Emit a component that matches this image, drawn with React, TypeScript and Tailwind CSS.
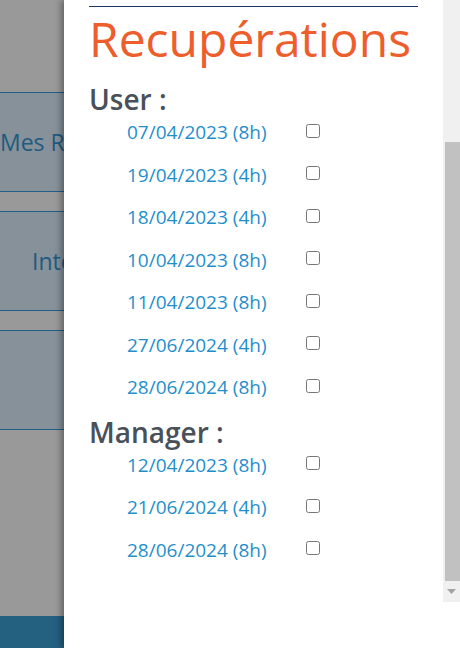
import React from 'react';

const userDates = [
  '07/04/2023 (8h)',
  '19/04/2023 (4h)',
  '18/04/2023 (4h)',
  '10/04/2023 (8h)',
  '11/04/2023 (8h)',
  '27/06/2024 (4h)',
  '28/06/2024 (8h)',
];

const managerDates = ['12/04/2023 (8h)', '21/06/2024 (4h)', '28/06/2024 (8h)'];

const font = { fontFamily: '"Open Sans", "Noto Sans", sans-serif' };

const DateRow = ({ label }: { label: string }) => (
  <div className="flex h-[42.5px] items-center">
    <span className="w-[217px] pl-[38px] text-[19px] text-[#1f8fcc]">{label}</span>
    <input type="checkbox" className="-mt-[3px] h-[14px] w-[14px] accent-[#666]" />
  </div>
);

const Backdrop = () => (
  <div className="flex w-[64px] shrink-0 flex-col overflow-hidden bg-[#999999]">
    <div className="h-[92px]" />
    <div className="flex h-[100px] w-[200px] items-center border-y border-[#1f5f8a] bg-[#86919a] text-[23px] text-[#1f5a80]">
      <span className="whitespace-nowrap">Mes Récupérations</span>
    </div>
    <div className="h-[19px]" />
    <div className="flex h-[100px] w-[200px] items-center border-y border-[#1f5f8a] bg-[#86919a] pl-[32px] text-[23px] text-[#1f5a80]">
      <span className="whitespace-nowrap">Interventions</span>
    </div>
    <div className="h-[19px]" />
    <div className="h-[100px] w-[200px] border-y border-[#1f5f8a] bg-[#86919a]" />
    <div className="flex-1" />
    <div className="h-[32px] bg-[#24607f]" />
  </div>
);

const Scrollbar = () => (
  <div className="flex h-[602px] w-[17px] shrink-0 flex-col bg-[#f0f0f0]">
    <div className="h-[142px]" />
    <div className="ml-[2px] h-[439px] bg-[#c1c1c1]" />
    <div className="flex flex-1 items-center justify-center">
      <svg width="9" height="5" viewBox="0 0 9 5">
        <path d="M0 0h9L4.5 5z" fill="#a3a3a3" />
      </svg>
    </div>
  </div>
);

export default function App() {
  return (
    <div className="flex h-[648px] w-[460px] overflow-hidden bg-white" style={font}>
      <Backdrop />
      <div className="flex flex-1 bg-white shadow-[-3px_0_6px_rgba(0,0,0,0.35)]">
        <div className="flex-1 pl-[25px] pt-[6px]">
          <div className="w-[329px] border-t border-[#1c3668]" />
          <h1 className="text-[48px] leading-[64px] font-normal text-[#ee5d2c]">Recupérations</h1>
          <h2 className="mt-[16px] text-[28px] leading-[24px] font-semibold text-[#4a5059]">User :</h2>
          {userDates.map((d, i) => (
            <DateRow key={i} label={d} />
          ))}
          <h2 className="mt-[11px] text-[28px] leading-[24px] font-semibold text-[#4a5059]">Manager :</h2>
          {managerDates.map((d, i) => (
            <DateRow key={i} label={d} />
          ))}
        </div>
        <Scrollbar />
      </div>
    </div>
  );
}
